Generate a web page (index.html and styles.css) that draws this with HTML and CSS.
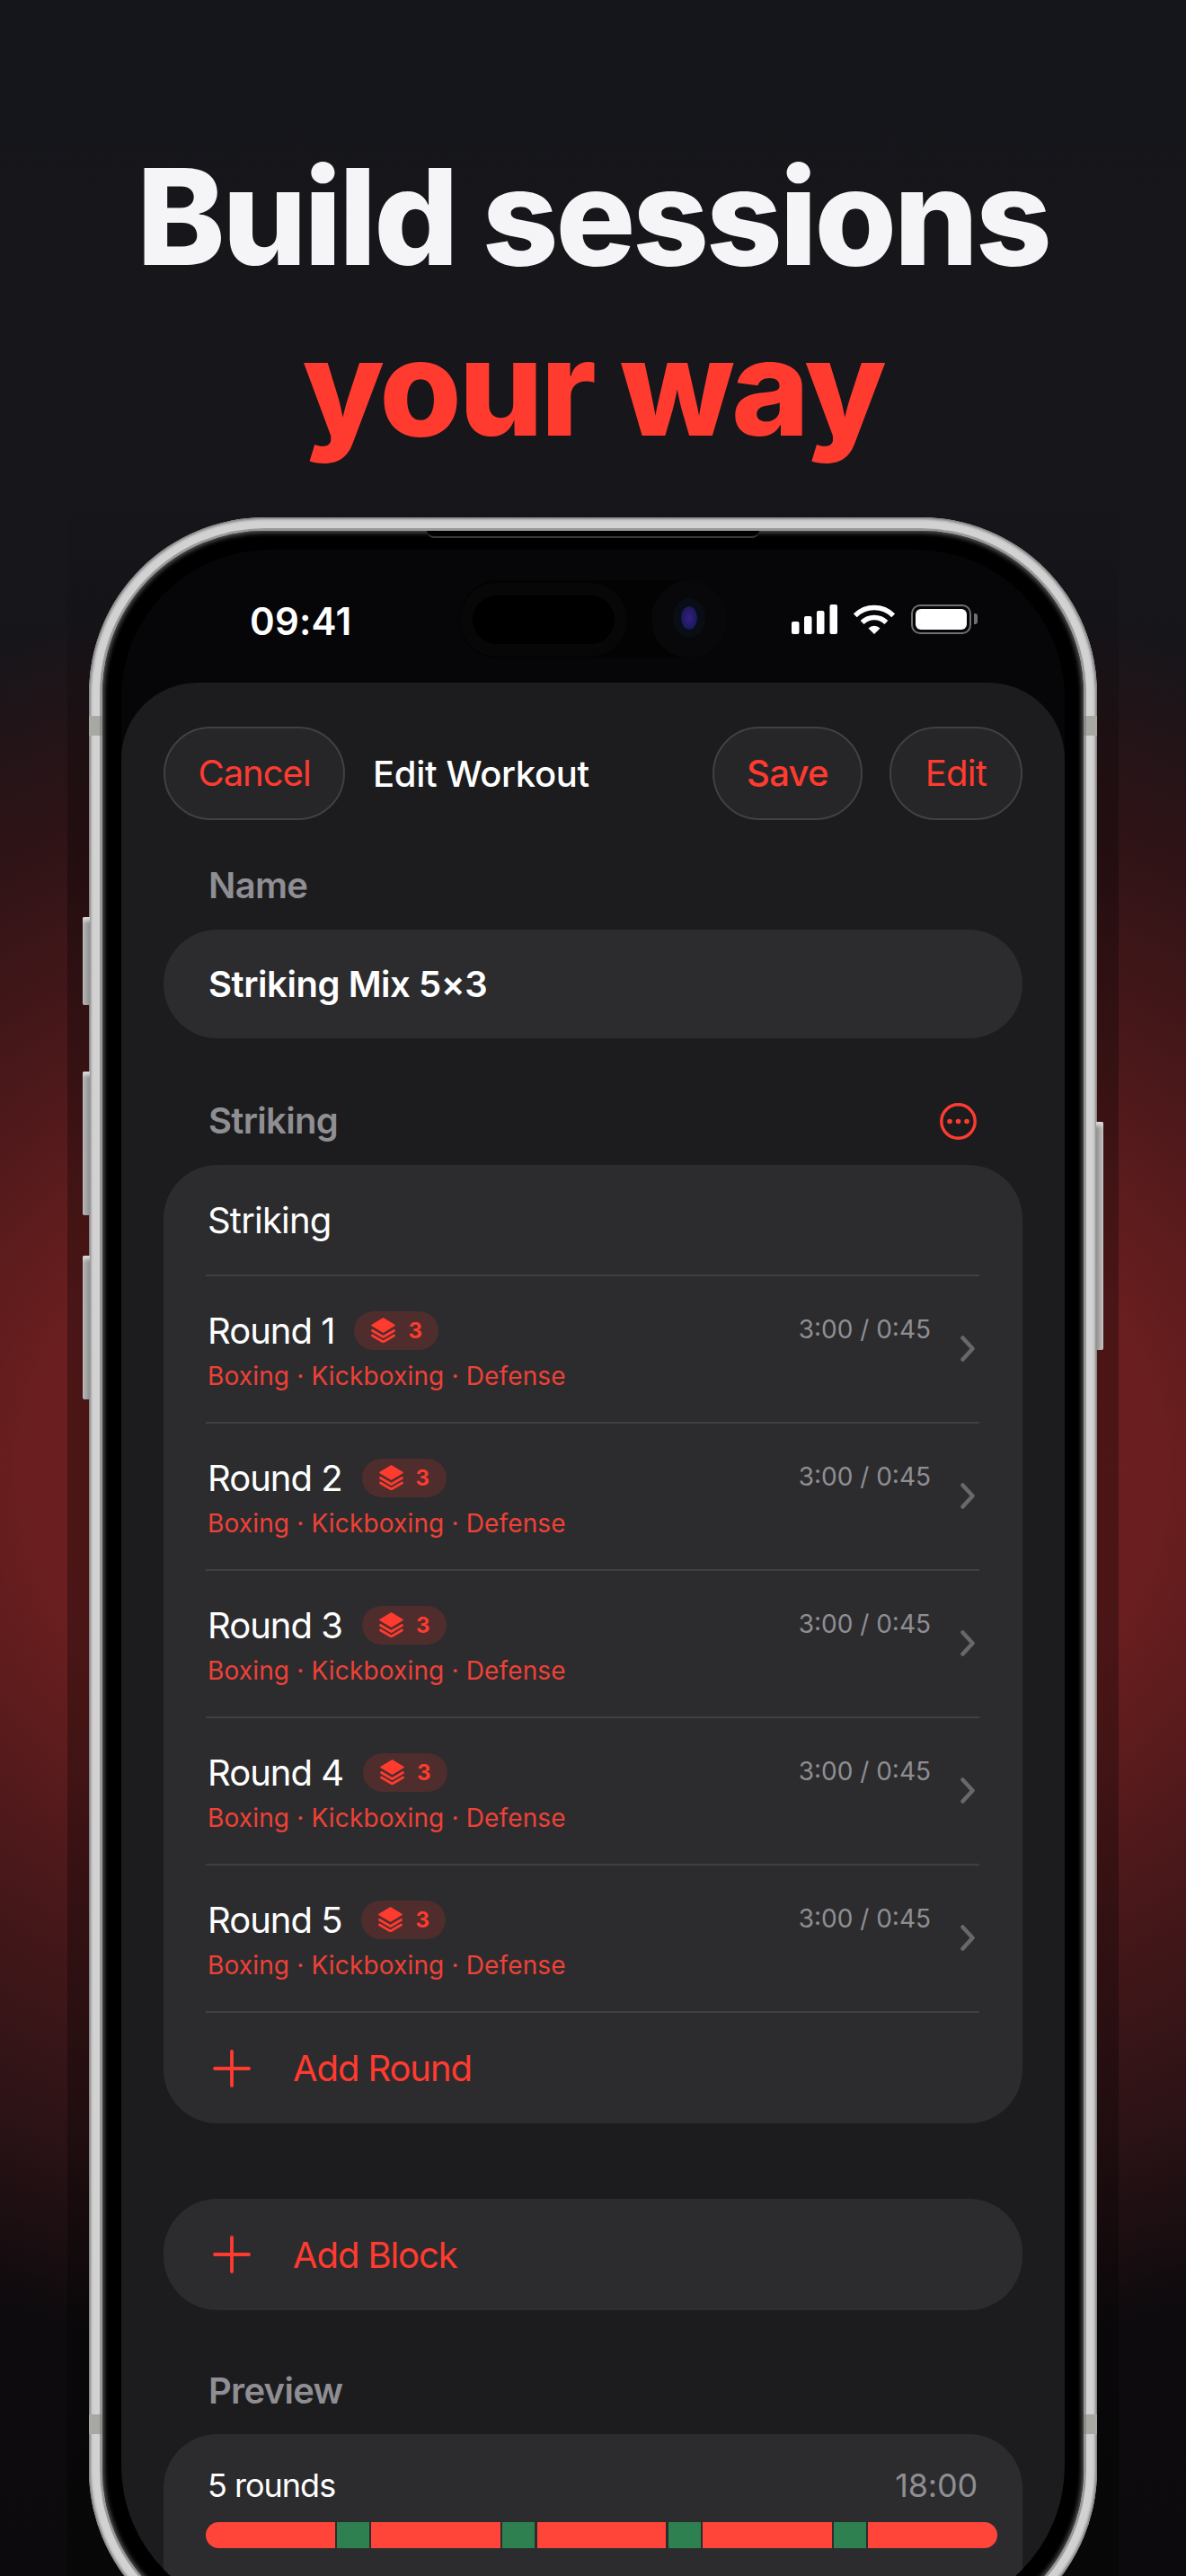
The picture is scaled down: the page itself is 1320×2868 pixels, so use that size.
FILE: index.html
```html
<!DOCTYPE html>
<html lang="en">
<head>
<meta charset="utf-8">
<title>Build sessions your way</title>
<link rel="stylesheet" href="styles.css">
</head>
<body>
<main class="page">
  <h1 class="hero"><span class="hero-white">Build sessions</span><span class="hero-red">your way</span></h1>
  <div class="phone">
    <div class="shade"></div>
    <i class="key key-l1"></i><i class="key key-l2"></i><i class="key key-l3"></i><i class="key key-r1"></i>
    <i class="band band-tl"></i><i class="band band-tr"></i><i class="band band-bl"></i><i class="band band-br"></i>
    <div class="bezel">
      <div class="speaker"></div>
      <div class="screen">
        <div class="status">
          <span class="clock">09:41</span>
          <div class="island">
            <div class="island-pill"></div>
            <div class="island-cam"><div class="lens"></div></div>
          </div>
          <div class="status-icons">
            <svg class="ic-signal" viewBox="0 0 51 33"><rect x="0" y="19" width="8.5" height="14" rx="2"/><rect x="14" y="13" width="8.5" height="20" rx="2"/><rect x="28" y="7" width="8.5" height="26" rx="2"/><rect x="42.500" y="0" width="8.500" height="33" rx="2"/></svg>
            <svg class="ic-wifi" viewBox="0 0 46 33"><path class="wf" d="M1.800 12.300A30 30 0 0 1 44.200 12.300"/><path class="wf" d="M9.600 20A19 19 0 0 1 36.400 20"/><path class="wfd" d="M23 33L16.500 26.500A9 9 0 0 1 29.500 26.500Z"/></svg>
            <div class="battery"><div class="battery-fill"></div><div class="battery-nub"></div></div>
          </div>
        </div>
        <div class="sheet">
          <nav class="nav">
            <button class="glass glass-cancel">Cancel</button>
            <span class="nav-title">Edit Workout</span>
            <button class="glass glass-save">Save</button>
            <button class="glass glass-edit">Edit</button>
          </nav>
          <div class="label label-name">Name</div>
          <div class="field">Striking Mix 5×3</div>
          <div class="section-head">
            <span class="label">Striking</span>
            <svg class="ic-more" viewBox="0 0 41 41"><circle cx="20.500" cy="20.500" r="18.700" fill="none" stroke-width="3.400"/><circle class="dot" cx="11" cy="20.500" r="2.800"/><circle class="dot" cx="20.500" cy="20.500" r="2.800"/><circle class="dot" cx="30" cy="20.500" r="2.800"/></svg>
          </div>
          <section class="card">
            <div class="card-title">Striking</div>

            <div class="row">
              <div class="row-main">
                <div class="row-top"><span class="row-name">Round 1</span><span class="badge"><svg class="ic-stack" viewBox="0 0 27 28"><path class="sf" d="M13.500 1L26 8.500L13.500 16L1 8.500Z"/><path class="ss" d="M1.500 14.500L13.500 21.500L25.500 14.500"/><path class="ss" d="M1.500 20L13.500 27L25.500 20"/></svg><b>3</b></span></div>
                <div class="row-sub">Boxing · Kickboxing · Defense</div>
              </div>
              <span class="row-time">3:00 / 0:45</span>
              <svg class="ic-chev" viewBox="0 0 16 29"><path d="M2.500 2.500L13.500 14.500L2.500 26.500"/></svg>
            </div>

            <div class="row">
              <div class="row-main">
                <div class="row-top"><span class="row-name">Round 2</span><span class="badge"><svg class="ic-stack" viewBox="0 0 27 28"><path class="sf" d="M13.500 1L26 8.500L13.500 16L1 8.500Z"/><path class="ss" d="M1.500 14.500L13.500 21.500L25.500 14.500"/><path class="ss" d="M1.500 20L13.500 27L25.500 20"/></svg><b>3</b></span></div>
                <div class="row-sub">Boxing · Kickboxing · Defense</div>
              </div>
              <span class="row-time">3:00 / 0:45</span>
              <svg class="ic-chev" viewBox="0 0 16 29"><path d="M2.500 2.500L13.500 14.500L2.500 26.500"/></svg>
            </div>

            <div class="row">
              <div class="row-main">
                <div class="row-top"><span class="row-name">Round 3</span><span class="badge"><svg class="ic-stack" viewBox="0 0 27 28"><path class="sf" d="M13.500 1L26 8.500L13.500 16L1 8.500Z"/><path class="ss" d="M1.500 14.500L13.500 21.500L25.500 14.500"/><path class="ss" d="M1.500 20L13.500 27L25.500 20"/></svg><b>3</b></span></div>
                <div class="row-sub">Boxing · Kickboxing · Defense</div>
              </div>
              <span class="row-time">3:00 / 0:45</span>
              <svg class="ic-chev" viewBox="0 0 16 29"><path d="M2.500 2.500L13.500 14.500L2.500 26.500"/></svg>
            </div>

            <div class="row">
              <div class="row-main">
                <div class="row-top"><span class="row-name">Round 4</span><span class="badge"><svg class="ic-stack" viewBox="0 0 27 28"><path class="sf" d="M13.500 1L26 8.500L13.500 16L1 8.500Z"/><path class="ss" d="M1.500 14.500L13.500 21.500L25.500 14.500"/><path class="ss" d="M1.500 20L13.500 27L25.500 20"/></svg><b>3</b></span></div>
                <div class="row-sub">Boxing · Kickboxing · Defense</div>
              </div>
              <span class="row-time">3:00 / 0:45</span>
              <svg class="ic-chev" viewBox="0 0 16 29"><path d="M2.500 2.500L13.500 14.500L2.500 26.500"/></svg>
            </div>

            <div class="row">
              <div class="row-main">
                <div class="row-top"><span class="row-name">Round 5</span><span class="badge"><svg class="ic-stack" viewBox="0 0 27 28"><path class="sf" d="M13.500 1L26 8.500L13.500 16L1 8.500Z"/><path class="ss" d="M1.500 14.500L13.500 21.500L25.500 14.500"/><path class="ss" d="M1.500 20L13.500 27L25.500 20"/></svg><b>3</b></span></div>
                <div class="row-sub">Boxing · Kickboxing · Defense</div>
              </div>
              <span class="row-time">3:00 / 0:45</span>
              <svg class="ic-chev" viewBox="0 0 16 29"><path d="M2.500 2.500L13.500 14.500L2.500 26.500"/></svg>
            </div>

            <div class="add add-round">
              <svg class="ic-plus" viewBox="0 0 42 42"><path d="M21 2V40M2 21H40"/></svg>
              <span>Add Round</span>
            </div>
          </section>
          <div class="add add-block">
            <svg class="ic-plus" viewBox="0 0 42 42"><path d="M21 2V40M2 21H40"/></svg>
            <span>Add Block</span>
          </div>
          <div class="label label-preview">Preview</div>
          <section class="card preview">
            <div class="preview-head"><span class="preview-count">5 rounds</span><span class="preview-total">18:00</span></div>
            <div class="timeline">
              <i class="seg-work"></i><i class="seg-rest"></i>
              <i class="seg-work"></i><i class="seg-rest"></i>
              <i class="seg-work"></i><i class="seg-rest"></i>
              <i class="seg-work"></i><i class="seg-rest"></i>
              <i class="seg-work"></i>
            </div>
          </section>
        </div>
      </div>
    </div>
  </div>
</main>
</body>
</html>
```
FILE: styles.css
```css
* { box-sizing: border-box; }
html, body { margin: 0; padding: 0; background: #15161b; }
body { width: 1320px; height: 2868px; overflow: hidden; font-family: "Inter", "Liberation Sans", sans-serif; }

.page {
  position: relative;
  isolation: isolate;
  width: 1320px;
  height: 2868px;
  overflow: hidden;
  display: flex;
  flex-direction: column;
  align-items: center;
  background:
    radial-gradient(ellipse 1500px 1030px at 660px 1640px, #7a2020 0%, #6a1e1f 42%, #4a181a 60%, #2e1316 80%, rgba(21,22,27,0) 100%),
    linear-gradient(180deg, #15161b 0%, #17161b 22%, #100c10 70%, #0c0a0c 100%);
}

.hero {
  margin: 0;
  padding-top: 147px;
  display: flex;
  flex-direction: column;
  align-items: center;
  font-size: 148px;
  line-height: 190px;
  font-weight: 800;
  letter-spacing: -0.021em;
  white-space: nowrap;
}
.hero-white { color: #f5f5f7; }
.hero-red { color: #ff3b30; }

.phone {
  position: relative;
  flex: none;
  width: 1122px;
  height: 2370px;
  margin-top: 49px;
  padding: 15px;
  border-radius: 196px;
  background: #d2d2d2;
  box-shadow: inset 0 0 3px 2px #7e7e7e;
}
.shade {
  position: absolute;
  left: -24px;
  right: -24px;
  top: -40px;
  bottom: 0;
  z-index: -1;
  background: linear-gradient(180deg, rgba(0,0,0,0) 0, rgba(0,0,0,.3) 420px);
}
.key {
  position: absolute;
  width: 8px;
  background: linear-gradient(90deg, #b9b9b9, #8f8f8f);
  border-radius: 2px 0 0 2px;
  box-shadow: inset 0 8px 4px -4px #dcdcdc;
}
.key-l1 { left: -7px; top: 445px; height: 98px; }
.key-l2 { left: -7px; top: 617px; height: 160px; }
.key-l3 { left: -7px; top: 822px; height: 160px; }
.key-r1 { right: -7px; top: 673px; height: 254px; border-radius: 0 2px 2px 0; background: linear-gradient(270deg, #c4c4c4, #8f8f8f); }
.band { position: absolute; width: 15px; height: 22px; background: #a8a8a2; }
.band-tl { left: 0; top: 221px; }
.band-tr { right: 0; top: 221px; }
.band-bl { left: 0; top: 2112px; }
.band-br { right: 0; top: 2112px; }

.bezel {
  position: relative;
  height: 100%;
  padding: 21px;
  border-radius: 181px;
  background: #000;
  box-shadow: 0 0 0 3px rgba(128,128,128,.7), inset 0 0 5px 2px #555;
}
.speaker {
  position: absolute;
  left: 361px;
  top: 0;
  width: 370px;
  height: 8px;
  background: #000;
  border-radius: 0 0 14px 14px;
  border-bottom: 2px solid #3a3a3c;
}
.screen {
  height: 100%;
  border-radius: 165px;
  background: #060608;
  overflow: hidden;
}

.status {
  position: relative;
  height: 148px;
  color: #fff;
}
.clock {
  position: absolute;
  left: 143px;
  top: 55px;
  font-size: 42px;
  line-height: 50px;
  font-weight: 600;
  letter-spacing: 0.2px;
}
.island {
  position: absolute;
  left: 376px;
  top: 34px;
  width: 298px;
  height: 87px;
  border-radius: 44px;
  background: #030304;
}
.island-pill {
  position: absolute;
  left: 15px;
  top: 17px;
  width: 158px;
  height: 54px;
  border-radius: 27px;
  background: #000;
  box-shadow: 0 0 0 14px #070708;
}
.island-cam {
  position: absolute;
  right: 0;
  top: 0;
  width: 84px;
  height: 87px;
  border-radius: 50%;
  background: #08080a;
}
.lens {
  position: absolute;
  left: 33px;
  top: 29px;
  width: 18px;
  height: 26px;
  border-radius: 50%;
  background: radial-gradient(ellipse at 50% 50%, #38207c 0, #221a68 50%, #101c3c 100%);
  box-shadow: 0 0 0 9px #090e16;
}
.status-icons {
  position: absolute;
  left: 746px;
  top: 61px;
  display: flex;
  align-items: center;
}
.ic-signal { width: 51px; height: 33px; fill: #fff; display: block; }
.ic-wifi { width: 46px; height: 33px; margin-left: 18px; display: block; }
.wf { fill: none; stroke: #fff; stroke-width: 5.500px; }
.wfd { fill: #fff; }
.battery {
  position: relative;
  width: 67px;
  height: 33px;
  margin-left: 18px;
  padding: 3px;
  border: 2.500px solid #707072;
  border-radius: 10px;
}
.battery-fill { width: 100%; height: 100%; background: #fff; border-radius: 6px; }
.battery-nub {
  position: absolute;
  right: -8.500px;
  top: 8px;
  width: 4px;
  height: 12px;
  background: #707072;
  border-radius: 0 3px 3px 0;
}

.sheet {
  height: 2300px;
  padding: 49px 47px 0;
  border-radius: 85px 85px 0 0;
  background: #1c1c1e;
  color: #fff;
}
.nav {
  display: flex;
  align-items: center;
  height: 104px;
}
.glass {
  height: 104px;
  padding: 0;
  border: 2px solid #414143;
  border-radius: 52px;
  background: #262628;
  color: #ff3b30;
  font: 400 40px/1 "Inter", "Liberation Sans", sans-serif;
}
.glass-cancel { width: 202px; letter-spacing: -1px; }
.glass-save { width: 167px; margin-left: auto; font-weight: 500; letter-spacing: -0.7px; }
.glass-edit { width: 148px; margin-left: 30px; letter-spacing: -0.7px; }
.nav-title { margin-left: 31px; font-size: 40px; font-weight: 500; letter-spacing: -0.35px; }

.label {
  font-size: 40px;
  line-height: 50px;
  font-weight: 600;
  color: #8e8e93;
  padding-left: 50px;
  letter-spacing: -0.7px;
}
.label-name { margin-top: 48px; }
.field {
  margin-top: 24px;
  height: 121px;
  padding-left: 50px;
  display: flex;
  align-items: center;
  border-radius: 60px;
  background: #2c2c2e;
  font-size: 40px;
  font-weight: 600;
  letter-spacing: -0.45px;
}
.section-head {
  margin-top: 67px;
  height: 50px;
  display: flex;
  align-items: center;
  justify-content: space-between;
  padding-right: 51px;
}
.ic-more { width: 41px; height: 41px; stroke: #ff3b30; display: block; }
.ic-more .dot { fill: #ff3b30; stroke: none; }

.card {
  margin-top: 24px;
  border-radius: 60px;
  background: #2c2c2e;
}
.card-title {
  height: 122px;
  padding-left: 49px;
  display: flex;
  align-items: center;
  font-size: 40px;
  font-weight: 400;
  letter-spacing: -0.8px;
}
.row {
  height: 164px;
  margin: 0 48px 0 47px;
  padding: 35px 0 0 2px;
  border-top: 2px solid #404042;
  display: flex;
}
.row-main { flex: 1; }
.row-top { display: flex; align-items: center; height: 50px; }
.row-name { font-size: 40px; font-weight: 400; letter-spacing: -1px; }
.badge {
  margin-left: 22px;
  height: 43px;
  width: 94px;
  padding-left: 19px;
  display: flex;
  align-items: center;
  gap: 14px;
  border-radius: 22px;
  background: #4e2d2c;
  color: #ff3b30;
}
.badge b { font-size: 24px; font-weight: 700; }
.ic-stack { width: 27px; height: 28px; display: block; }
.sf { fill: #ff3b30; stroke: #ff3b30; stroke-width: 1.500px; stroke-linejoin: round; }
.ss { fill: none; stroke: #ff3b30; stroke-width: 2.800px; stroke-linecap: round; stroke-linejoin: round; }
.row-sub {
  margin-top: 8px;
  font-size: 28px;
  line-height: 36px;
  letter-spacing: 0.15px;
  color: #ee4137;
}
.row-time {
  margin-right: 33px;
  padding-top: 1px;
  font-size: 28px;
  line-height: 46px;
  color: #8e8e93;
}
.ic-chev {
  width: 16px;
  height: 29px;
  margin: 31px 5px 0 0;
  fill: none;
  stroke: #68686c;
  stroke-width: 4.500px;
  stroke-linecap: round;
  stroke-linejoin: round;
  flex: none;
}
.add {
  display: flex;
  align-items: center;
  color: #ff3b30;
  font-size: 40px;
  letter-spacing: -1.1px;
  padding-left: 55px;
  gap: 47px;
}
.add-round {
  height: 125px;
  margin: 0 48px 0 47px;
  padding-left: 8px;
  border-top: 2px solid #404042;
}
.add-block {
  margin-top: 84px;
  height: 124px;
  border-radius: 60px;
  background: #2c2c2e;
}
.ic-plus {
  width: 42px;
  height: 42px;
  fill: none;
  stroke: #ff3b30;
  stroke-width: 3.800px;
  stroke-linecap: round;
  flex: none;
}
.label-preview { margin-top: 65px; }
.preview {
  margin-top: 23px;
  height: 260px;
  padding: 32px 50px 0 47px;
}
.preview-head {
  display: flex;
  justify-content: space-between;
  padding-left: 2px;
  font-size: 36px;
  line-height: 50px;
}
.preview-count { letter-spacing: -1px; }
.preview-total { color: #8e8e93; letter-spacing: -0.2px; }
.timeline {
  margin-top: 16px;
  margin-right: -22px;
  height: 29px;
  display: flex;
  gap: 2.400px;
  border-radius: 14.500px;
  overflow: hidden;
}
.seg-work { flex: 4; background: #ff453a; }
.seg-rest { flex: 1; background: #2f8050; }
```
